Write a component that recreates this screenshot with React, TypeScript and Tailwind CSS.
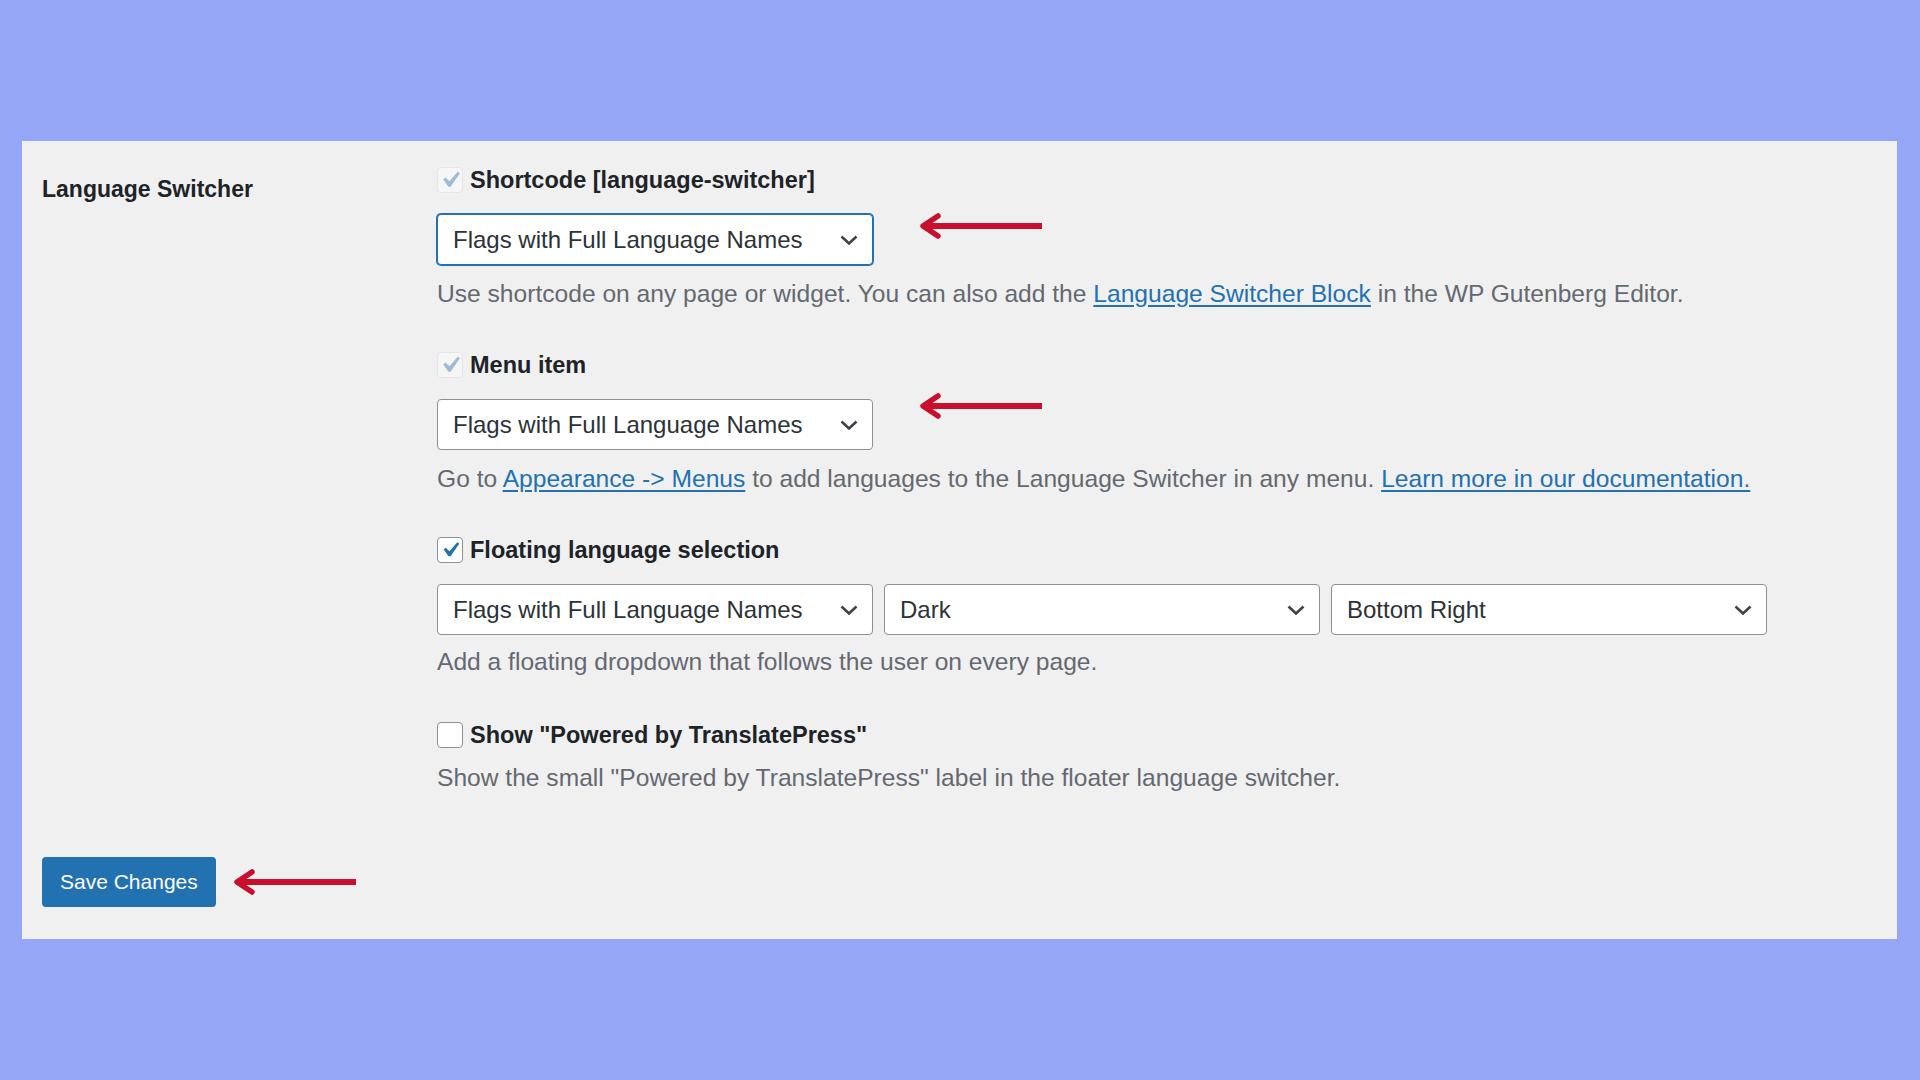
import type { ReactNode } from "react";

type CheckState = "disabled" | "checked" | "unchecked";

function CheckIcon({ color, size }: { color: string; size: string }) {
  return (
    <svg viewBox="0 0 20 20" className={`${size} shrink-0`} fill={color}>
      <path d="M14.83 4.89l1.34.94-5.81 8.38H9.02L5.78 9.67l1.34-1.25 2.57 2.4z" />
    </svg>
  );
}

function Checkbox({ state, label }: { state: CheckState; label: string }) {
  const box =
    state === "disabled"
      ? "border-[#e6e6e8] bg-[#f5f6f6]"
      : "border-[#8c8f94] bg-white";
  return (
    <div className="flex h-[26px] items-center gap-[7px]">
      <span className={`flex h-[26px] w-[26px] items-center justify-center rounded-[4px] border ${box}`}>
        {state === "disabled" && <CheckIcon color="#9dbad8" size="h-[32px] w-[32px]" />}
        {state === "checked" && <CheckIcon color="#2271b1" size="h-[30px] w-[30px]" />}
      </span>
      <span className="text-[23.5px] font-semibold leading-[26px] text-[#1d2327]">{label}</span>
    </div>
  );
}

function Select({ value, focused = false }: { value: string; focused?: boolean }) {
  return (
    <div
      className={`flex h-[51px] w-[436px] items-center justify-between rounded-[4px] border bg-white pl-[15px] pr-[13px] ${
        focused ? "border-[#2271b1] shadow-[0_0_0_1px_#2271b1]" : "border-[#8c8f94]"
      }`}
    >
      <span className="text-[24px] text-[#2c3338]">{value}</span>
      <svg viewBox="0 0 20 12" className="h-[12px] w-[20px]" fill="none" stroke="#3c434a" strokeWidth="2.6">
        <path d="M2.5 2.5l7.5 7 7.5-7" />
      </svg>
    </div>
  );
}

function Arrow({ className = "" }: { className?: string }) {
  return (
    <svg viewBox="0 0 126 26" className={`h-[26px] w-[126px] shrink-0 ${className}`} fill="none" stroke="#c8102e">
      <path d="M9 13H124" strokeWidth="6" />
      <path d="M20 3L5 13l15 10" strokeWidth="5.5" strokeLinecap="round" strokeLinejoin="round" />
    </svg>
  );
}

function Desc({ children, className = "" }: { children: ReactNode; className?: string }) {
  return <p className={`text-[24.6px] leading-8 text-[#646970] ${className}`}>{children}</p>;
}

function Link({ children }: { children: ReactNode }) {
  return <a className="text-[#2271b1] underline underline-offset-[3px]">{children}</a>;
}

export default function App() {
  return (
    <div
      className="h-[1080px] w-[1920px] overflow-hidden bg-[#96a6f7] pl-[22px] pt-[141px]"
      style={{ fontFamily: '"Liberation Sans", Arial, sans-serif' }}
    >
      <div className="h-[798px] w-[1875px] bg-[#f0f0f1] pt-[26px]">
        <div className="flex">
          <div className="w-[415px] pl-[20px] pt-[6px] text-[23px] font-semibold leading-8 text-[#1d2327]">
            Language Switcher
          </div>

          <div className="flex flex-col">
            {/* Shortcode */}
            <Checkbox state="disabled" label="Shortcode [language-switcher]" />
            <div className="mt-[21px] flex items-start">
              <Select value="Flags with Full Language Names" focused />
              <Arrow className="-mt-[1px] ml-[45px]" />
            </div>
            <Desc className="mt-[13px]">
              Use shortcode on any page or widget. You can also add the <Link>Language Switcher Block</Link> in the WP
              Gutenberg Editor.
            </Desc>

            {/* Menu item */}
            <div className="mt-[42px]">
              <Checkbox state="disabled" label="Menu item" />
            </div>
            <div className="mt-[21px] flex items-start">
              <Select value="Flags with Full Language Names" />
              <Arrow className="-mt-[6px] ml-[45px]" />
            </div>
            <Desc className="mt-[13px]">
              Go to <Link>Appearance -&gt; Menus</Link> to add languages to the Language Switcher in any menu.{" "}
              <Link>Learn more in our documentation.</Link>
            </Desc>

            {/* Floating */}
            <div className="mt-[42px]">
              <Checkbox state="checked" label="Floating language selection" />
            </div>
            <div className="mt-[21px] flex gap-[11px]">
              <Select value="Flags with Full Language Names" />
              <Select value="Dark" />
              <Select value="Bottom Right" />
            </div>
            <Desc className="mt-[11px]">Add a floating dropdown that follows the user on every page.</Desc>

            {/* Powered by */}
            <div className="mt-[44px]">
              <Checkbox state="unchecked" label={'Show "Powered by TranslatePress"'} />
            </div>
            <Desc className="mt-[14px]">
              Show the small "Powered by TranslatePress" label in the floater language switcher.
            </Desc>
          </div>
        </div>

        <div className="mt-[63px] flex items-center gap-[16px] pl-[20px]">
          <button className="h-[50px] rounded-[4px] bg-[#2271b1] px-[18px] text-[21px] text-white">Save Changes</button>
          <Arrow />
        </div>
      </div>
    </div>
  );
}
